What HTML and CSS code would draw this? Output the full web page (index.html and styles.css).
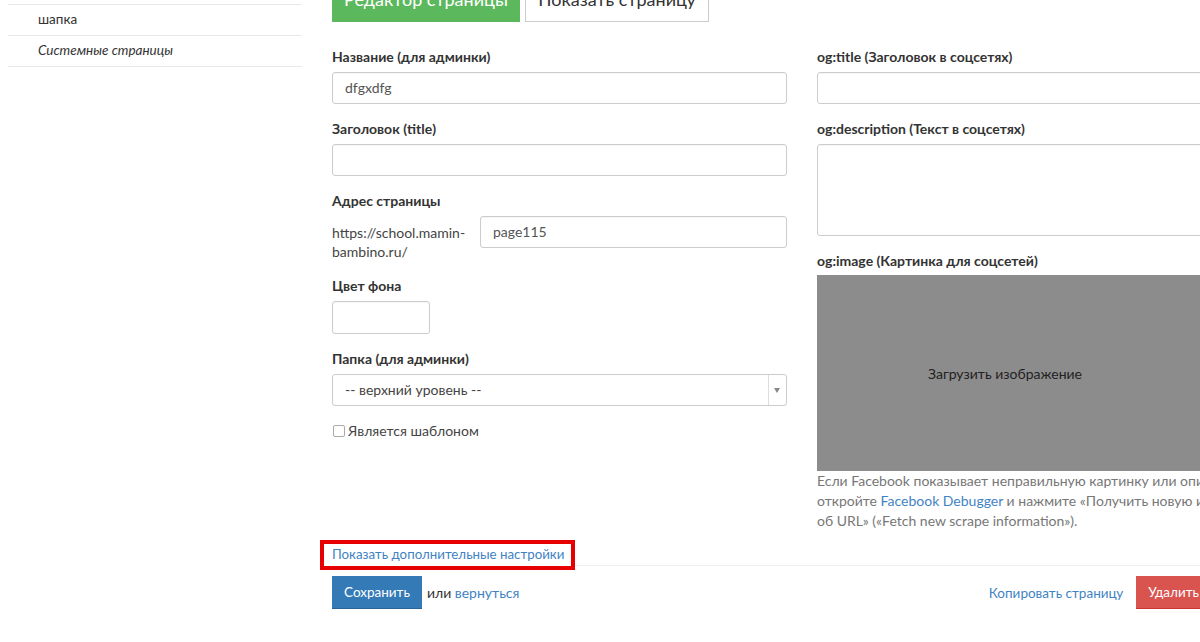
FILE: index.html
```html
<!DOCTYPE html>
<html lang="ru">

<head>
    <meta charset="UTF-8" />
    <meta name="viewport" content="width=device-width, initial-scale=1.0" />
    <title>Редактор страницы</title>
    <link rel="stylesheet" href="styles.css">
</head>

<body>
    <div class="layout">
        <!-- левое меню страниц -->
        <aside class="side">
            <ul class="page-list">
                <li>шапка</li>
                <li class="system">Системные страницы</li>
            </ul>
        </aside>

        <main class="main">
            <div class="tabs">
                <a class="tab tab-active">Редактор страницы</a>
                <a class="tab">Показать страницу</a>
            </div>

            <div class="form-row">
                <!-- левая колонка -->
                <div class="col col-left">
                    <div class="group">
                        <label>Название (для админки)</label>
                        <div class="input">dfgxdfg</div>
                    </div>
                    <div class="group">
                        <label>Заголовок (title)</label>
                        <div class="input"></div>
                    </div>
                    <div class="group">
                        <label>Адрес страницы</label>
                        <div class="address">
                            <div class="address-prefix">https://school.mamin-<br>bambino.ru/</div>
                            <div class="input address-input">page115</div>
                        </div>
                    </div>
                    <div class="group">
                        <label>Цвет фона</label>
                        <div class="input color-input"></div>
                    </div>
                    <div class="group">
                        <label>Папка (для админки)</label>
                        <div class="select">
                            <span class="select-value">-- верхний уровень --</span>
                            <span class="select-arrow"></span>
                        </div>
                    </div>
                    <div class="check">
                        <span class="check-box"></span>
                        Является шаблоном
                    </div>
                </div>

                <!-- правая колонка: соцсети -->
                <div class="col col-right">
                    <div class="group">
                        <label>og:title (Заголовок в соцсетях)</label>
                        <div class="input"></div>
                    </div>
                    <div class="group">
                        <label>og:description (Текст в соцсетях)</label>
                        <div class="input textarea"></div>
                    </div>
                    <div class="group group-image">
                        <label>og:image (Картинка для соцсетей)</label>
                        <div class="upload">Загрузить изображение</div>
                        <p class="help">Если Facebook показывает неправильную картинку или описание,<br>
                            откройте <a class="link">Facebook Debugger</a> и нажмите «Получить новую информацию<br>
                            об URL» («Fetch new scrape information»).</p>
                    </div>
                </div>
            </div>

            <div class="more">
                <span class="mark"><a class="link">Показать дополнительные настройки</a></span>
            </div>

            <div class="footer">
                <div class="footer-left">
                    <a class="btn btn-save">Сохранить</a>
                    <span class="or">или <a class="link">вернуться</a></span>
                </div>
                <div class="footer-right">
                    <a class="link">Копировать страницу</a>
                    <a class="btn btn-delete">Удалить</a>
                </div>
            </div>
        </main>
    </div>
</body>

</html>
```

FILE: styles.css
```css
        html,
        body {
            margin: 0;
            overflow: hidden;
        }

        body {
            background: #fff;
            color: #333;
            font-family: "Lato", "Liberation Sans", sans-serif;
            font-size: 14px;
        }

        .layout {
            display: flex;
            align-items: flex-start;
            width: 1400px;
        }

        /* левое меню */
        .side {
            width: 294px;
            margin-left: 8px;
            padding-top: 4px;
            font-size: 13.5px;
        }

        .page-list {
            list-style: none;
            margin: 0;
            padding: 0;
        }

        .page-list li {
            border-top: 1px solid #e8e8e8;
            height: 30px;
            line-height: 29px;
            padding-left: 30px;
        }

        .page-list li:last-child {
            border-bottom: 1px solid #e8e8e8;
        }

        .page-list .system {
            font-style: italic;
        }

        /* основная часть */
        .main {
            margin-left: 30px;
            width: 940px;
        }

        .tabs {
            display: flex;
            gap: 5px;
            margin-top: -22px;
        }

        .tab {
            display: block;
            height: 44px;
            line-height: 40px;
            font-size: 18px;
            text-align: center;
            white-space: nowrap;
            box-sizing: border-box;
            border: 1px solid #ccc;
            color: #333;
            width: 184px;
        }

        .tab-active {
            background: #5cb85c;
            border-color: #5cb85c;
            color: #fff;
            width: 188px;
        }

        .form-row {
            display: flex;
            gap: 30px;
            margin-top: 26px;
        }

        .col-left {
            width: 455px;
        }

        .col-right {
            width: 455px;
        }

        .group {
            margin-bottom: 16px;
        }

        .group label {
            display: block;
            font-weight: 700;
            line-height: 18px;
            margin-bottom: 6px;
        }

        .input {
            height: 32px;
            box-sizing: border-box;
            border: 1px solid #ccc;
            border-radius: 3px;
            padding: 0 12px;
            line-height: 30px;
            color: #555;
            box-shadow: inset 0 1px 1px rgba(0, 0, 0, 0.04);
        }

        .textarea {
            height: 92px;
        }

        .address {
            display: flex;
            gap: 6px;
            margin-top: 1px;
        }

        .address-prefix {
            width: 142px;
            padding-top: 7px;
            line-height: 19px;
            color: #444;
            white-space: nowrap;
        }

        .address-input {
            flex: 1;
        }

        .color-input {
            width: 98px;
            height: 33px;
        }

        .select {
            display: flex;
            height: 32px;
            box-sizing: border-box;
            border: 1px solid #ccc;
            border-radius: 3px;
            color: #444;
        }

        .select-value {
            flex: 1;
            line-height: 30px;
            padding-left: 12px;
        }

        .select-arrow {
            width: 17px;
            border-left: 1px solid #ddd;
            position: relative;
        }

        .select-arrow::after {
            content: '';
            position: absolute;
            left: 5px;
            top: 13px;
            border-left: 3px solid transparent;
            border-right: 3px solid transparent;
            border-top: 5px solid #888;
        }

        .check {
            display: flex;
            align-items: center;
            gap: 3px;
            line-height: 18px;
            color: #444;
        }

        .check-box {
            width: 10px;
            height: 10px;
            border: 1px solid #aaa;
            border-radius: 2px;
            margin-left: 1px;
        }

        .group-image label {
            margin-bottom: 5px;
        }

        .upload {
            height: 196px;
            background: #8c8c8c;
            color: #222;
            display: flex;
            align-items: center;
            justify-content: center;
            padding-right: 79px;
        }

        .help {
            margin: 0;
            line-height: 20px;
            color: #777;
            white-space: nowrap;
        }

        .link {
            color: #3f83c4;
            cursor: pointer;
        }

        /* ссылка с красной рамкой */
        .more {
            margin-top: -2px;
            line-height: 18px;
            font-size: 13.3px;
            border-bottom: 1px solid #eee;
            padding-bottom: 2px;
        }

        .mark {
            position: relative;
            z-index: 0;
        }

        .mark::before {
            content: '';
            position: absolute;
            top: -6px;
            bottom: -8px;
            left: -12px;
            right: -11px;
            border: 4px solid #e60000;
            background: #fff;
            z-index: -1;
        }

        .footer {
            display: flex;
            justify-content: space-between;
            align-items: center;
            margin-top: 10px;
            width: 879px;
        }

        .footer-left,
        .footer-right {
            display: flex;
            align-items: center;
            gap: 5px;
        }

        .footer-right {
            gap: 13px;
        }

        .btn {
            display: block;
            height: 33px;
            line-height: 33px;
            padding: 0 12px;
            font-size: 13.5px;
            color: #fff;
            box-sizing: border-box;
        }

        .btn-save {
            background: #337ab7;
            border-bottom: 1px solid #2a6496;
        }

        .btn-delete {
            background: #d9534f;
            border-bottom: 1px solid #c33;
        }

        .footer-right .link {
            font-size: 13.5px;
        }
```
